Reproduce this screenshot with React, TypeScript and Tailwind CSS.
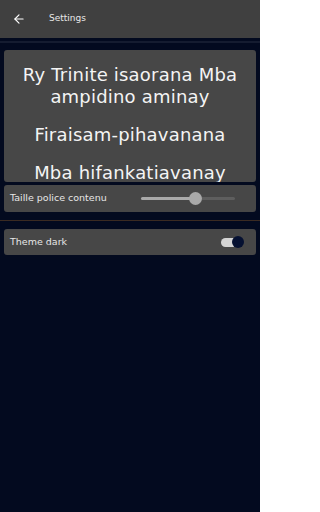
import { ArrowLeft } from 'lucide-react';

const font = { fontFamily: '"DejaVu Sans", "Noto Sans", sans-serif' };

export default function App() {
  const size = 57;

  return (
    <div className="w-[260px] h-[512px] bg-[#030a1f] overflow-hidden" style={font}>
      {/* Header */}
      <div className="h-[38px] bg-[#404040] flex items-center">
        <ArrowLeft size={14} strokeWidth={2} className="text-white ml-[12px]" />
        <span className="ml-[23px] text-[9px] text-[#e8e8e8]">Settings</span>
      </div>
      <div className="mt-[3px] h-[2px] bg-[#151c30]" />

      {/* Preview */}
      <div className="mx-[4px] mt-[7px] h-[132px] overflow-hidden rounded-[3px] bg-[#474747] pt-[14px] px-[4px] text-center text-[#f4f4f4] text-[18px] leading-[22px] tracking-[0.2px] flex flex-col gap-[16px]">
        <p>Ry Trinite isaorana Mba ampidino aminay</p>
        <p>Firaisam-pihavanana</p>
        <p>Mba hifankatiavanay</p>
      </div>

      {/* Font size */}
      <div className="mx-[4px] mt-[3px] h-[27px] rounded-[3px] bg-[#474747] flex items-center justify-between pl-[6px] pr-[21px]">
        <span className="text-[9.5px] text-[#e6e6e6]">Taille police contenu</span>
        <div className="relative w-[94px] h-[13px] flex items-center">
          <div className="w-full h-[3px] rounded-full bg-[#5e5e5e]" />
          <div className="absolute left-0 h-[3px] rounded-full bg-[#a9a9a9]" style={{ width: `${size}%` }} />
          <div className="absolute w-[13px] h-[13px] rounded-full bg-[#a9a9a9]" style={{ left: `calc(${size}% - 6px)` }} />
        </div>
      </div>

      <div className="mt-[8px] h-px bg-[#3b2b22]" />

      {/* Theme */}
      <div className="mx-[4px] mt-[8px] h-[26px] rounded-[3px] bg-[#474747] flex items-center justify-between pl-[6px] pr-[12px]">
        <span className="text-[9.5px] text-[#e6e6e6]">Theme dark</span>
        <div className="relative w-[23px] h-[12px] flex items-center">
          <div className="w-[21px] h-[9px] rounded-full bg-[#d4d4d4]" />
          <div className="absolute right-0 w-[12px] h-[12px] rounded-full bg-[#051031]" />
        </div>
      </div>
    </div>
  );
}
